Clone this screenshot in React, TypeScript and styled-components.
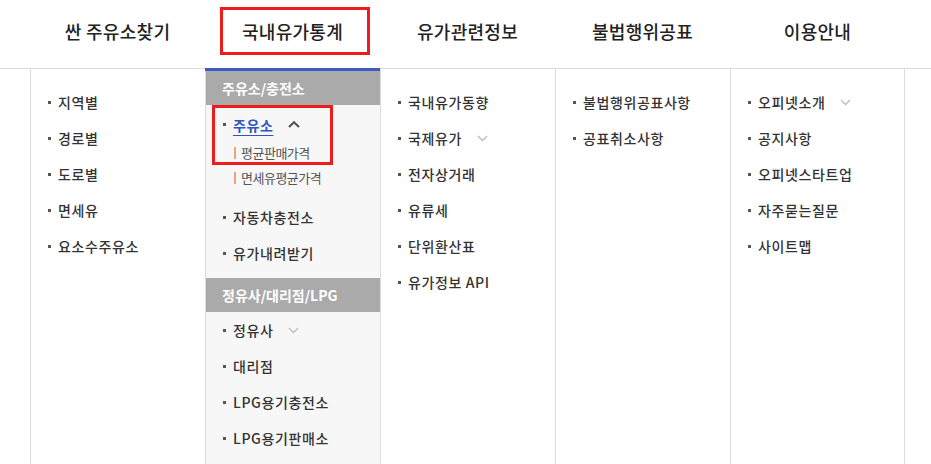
import React from "react";
import styled, { createGlobalStyle } from "styled-components";

const Global = createGlobalStyle`
  html, body { margin: 0; padding: 0; background: #fff; }
  body { font-family: "Noto Sans CJK KR", "Noto Sans", sans-serif; color: #333; }
  * { box-sizing: border-box; }
`;

const Page = styled.div`
  position: relative;
  width: 931px;
  height: 464px;
  overflow: hidden;
`;

const NavBar = styled.nav`
  display: flex;
  padding-left: 30px;
  height: 69px;
  border-bottom: 1px solid #dcdcdc;
`;

const NavItem = styled.div`
  width: 175px;
  height: 62px;
  display: flex;
  align-items: center;
  justify-content: center;
  font-size: 18px;
  font-weight: 500;
  color: #222;
  letter-spacing: 0.3px;
`;

const Panel = styled.div`
  display: flex;
  padding-left: 30px;
`;

const Column = styled.div<{ $active?: boolean; $last?: boolean }>`
  width: 175px;
  min-height: 420px;
  border-left: 1px solid #dcdcdc;
  border-right: ${(p) => (p.$last ? "1px solid #dcdcdc" : "none")};
  background: ${(p) => (p.$active ? "#f7f7f7" : "#fff")};
  padding-top: ${(p) => (p.$active ? "0" : "15px")};
  position: relative;
  ${(p) =>
    p.$active
      ? `&::before { content: ""; position: absolute; left: -1px; right: 0; top: -1px; height: 3px; background: #3b5cc4; }`
      : ""}
`;

const GroupHead = styled.div<{ $gap?: number }>`
  height: 34px;
  margin-top: ${(p) => p.$gap ?? 2}px;
  background: #aaaaaa;
  color: #fff;
  font-size: 14px;
  font-weight: 700;
  display: flex;
  align-items: center;
  padding-left: 16px;
`;

const List = styled.ul<{ $pad?: number }>`
  list-style: none;
  margin: 0;
  padding: ${(p) => p.$pad ?? 0}px 0 0 0;
`;

const Item = styled.li<{ $h?: number }>`
  height: ${(p) => p.$h ?? 36}px;
  display: flex;
  align-items: center;
  padding-left: 17px;
  font-size: 14px;
  color: #333;
  font-weight: 500;
  letter-spacing: 0.6px;
`;

const Bullet = styled.span`
  width: 3px;
  height: 3px;
  background: #555;
  margin-right: 7px;
  flex: none;
`;

const ActiveLabel = styled.span`
  color: #2f55c0;
  font-weight: 700;
  text-decoration: underline;
  text-underline-offset: 4px;
  text-decoration-thickness: 1px;
`;

const SubList = styled.ul`
  list-style: none;
  margin: 0;
  padding: 0 0 9px 0;
`;

const SubItem = styled.li`
  height: 25px;
  display: flex;
  align-items: center;
  padding-left: 28px;
  font-size: 13px;
  color: #555;
  letter-spacing: -0.5px;
`;

const SubBar = styled.span`
  width: 2px;
  height: 12px;
  background: #f0a07a;
  margin-right: 5px;
  flex: none;
`;

const Chevron = styled.svg`
  margin-left: 15px;
  flex: none;
`;

const Highlight = styled.div`
  position: absolute;
  border: 3px solid #ee1c1c;
  pointer-events: none;
`;

const Down = () => (
  <Chevron width="11" height="7" viewBox="0 0 11 7">
    <polyline points="1,1 5.5,5.5 10,1" fill="none" stroke="#bbb" strokeWidth="1.3" />
  </Chevron>
);

const Up = () => (
  <Chevron width="12" height="7" viewBox="0 0 12 7">
    <polyline points="1,6 6,1.3 11,6" fill="none" stroke="#555" strokeWidth="2.2" />
  </Chevron>
);

type Entry = { label: string; chevron?: boolean };

const col1: Entry[] = [
  { label: "지역별" },
  { label: "경로별" },
  { label: "도로별" },
  { label: "면세유" },
  { label: "요소수주유소" },
];
const col3: Entry[] = [
  { label: "국내유가동향" },
  { label: "국제유가", chevron: true },
  { label: "전자상거래" },
  { label: "유류세" },
  { label: "단위환산표" },
  { label: "유가정보 API" },
];
const col4: Entry[] = [{ label: "불법행위공표사항" }, { label: "공표취소사항" }];
const col5: Entry[] = [
  { label: "오피넷소개", chevron: true },
  { label: "공지사항" },
  { label: "오피넷스타트업" },
  { label: "자주묻는질문" },
  { label: "사이트맵" },
];

const Entries = ({ items }: { items: Entry[] }) => (
  <List>
    {items.map((e) => (
      <Item key={e.label}>
        <Bullet />
        {e.label}
        {e.chevron && <Down />}
      </Item>
    ))}
  </List>
);

export default function App() {
  return (
    <>
      <Global />
      <Page>
        <NavBar>
          <NavItem>싼 주유소찾기</NavItem>
          <NavItem>국내유가통계</NavItem>
          <NavItem>유가관련정보</NavItem>
          <NavItem>불법행위공표</NavItem>
          <NavItem>이용안내</NavItem>
        </NavBar>
        <Panel>
          <Column>
            <Entries items={col1} />
          </Column>
          <Column $active>
            <GroupHead>주유소/충전소</GroupHead>
            <List $pad={4}>
              <Item $h={31}>
                <Bullet />
                <ActiveLabel>주유소</ActiveLabel>
                <Up />
              </Item>
            </List>
            <SubList>
              <SubItem>
                <SubBar />
                평균판매가격
              </SubItem>
              <SubItem>
                <SubBar />
                면세유평균가격
              </SubItem>
            </SubList>
            <List>
              <Item>
                <Bullet />
                자동차충전소
              </Item>
              <Item>
                <Bullet />
                유가내려받기
              </Item>
            </List>
            <GroupHead $gap={7}>정유사/대리점/LPG</GroupHead>
            <List>
              <Item>
                <Bullet />
                정유사
                <Down />
              </Item>
              <Item>
                <Bullet />
                대리점
              </Item>
              <Item>
                <Bullet />
                LPG용기충전소
              </Item>
              <Item>
                <Bullet />
                LPG용기판매소
              </Item>
            </List>
          </Column>
          <Column>
            <Entries items={col3} />
          </Column>
          <Column>
            <Entries items={col4} />
          </Column>
          <Column $last>
            <Entries items={col5} />
          </Column>
        </Panel>
        <Highlight style={{ left: 220, top: 7, width: 150, height: 48 }} />
        <Highlight style={{ left: 212, top: 105, width: 121, height: 60 }} />
      </Page>
    </>
  );
}
